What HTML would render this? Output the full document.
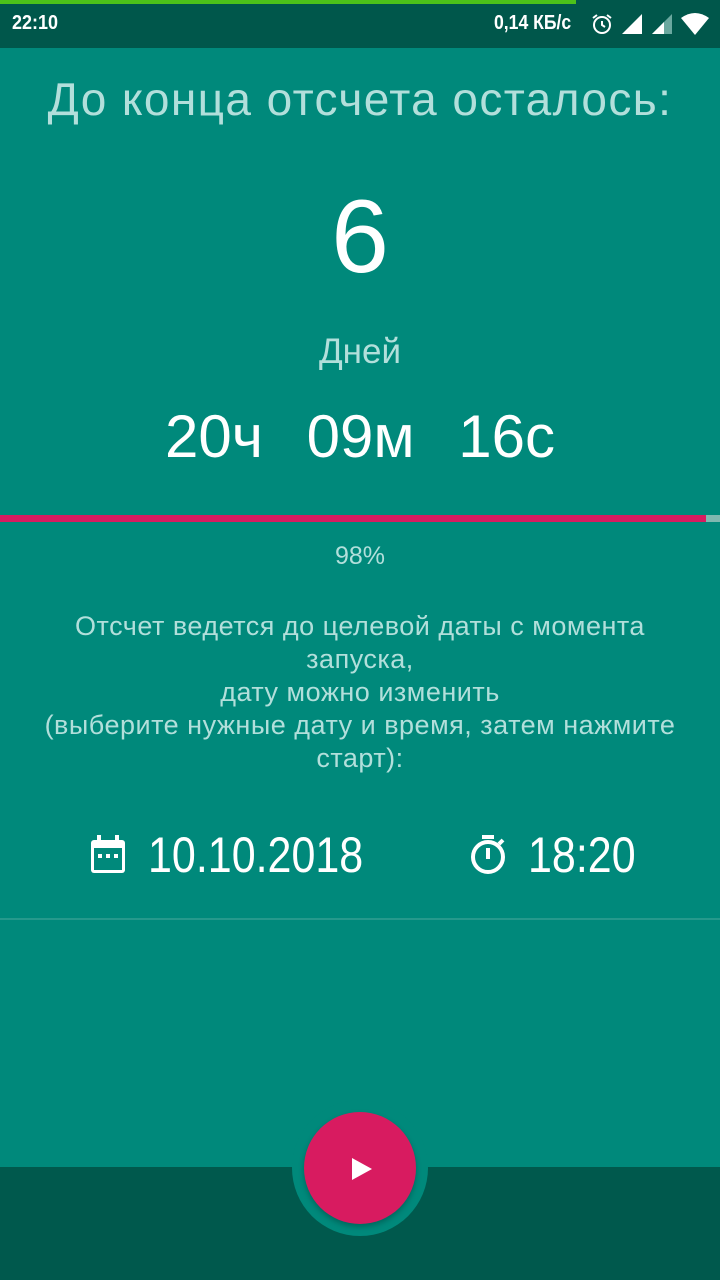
<!DOCTYPE html>
<html><head><meta charset="utf-8"><style>
*{margin:0;padding:0;box-sizing:border-box}
body{width:720px;height:1280px;background:#00897b;font-family:"Liberation Sans","DejaVu Sans",sans-serif;position:relative;overflow:hidden;color:#fff}
.sb{position:absolute;top:0;left:0;width:720px;height:48px;background:#00574b}
.t{position:absolute;left:0;width:720px;text-align:center;white-space:nowrap}
</style></head><body>
<div class="sb">
 <div style="position:absolute;top:0;left:0;width:576px;height:4px;background:#4cc21a"></div>
 <div style="position:absolute;left:12px;top:12px;font-size:20px;font-weight:bold;transform:scaleX(.9);transform-origin:left">22:10</div>
 <div style="position:absolute;left:494px;top:12px;font-size:20px;font-weight:bold;transform:scaleX(.88);transform-origin:left">0,14 КБ/с</div>
 <svg style="position:absolute;left:590px;top:12px" width="24" height="24" viewBox="0 0 24 24"><circle cx="12" cy="13" r="8" fill="none" stroke="#fff" stroke-width="2"/><path d="M12 9v4l3 2M3 6l4-3M21 6l-4-3" stroke="#fff" stroke-width="2" fill="none"/></svg>
 <svg style="position:absolute;left:620px;top:12px" width="24" height="24"><polygon points="2,22 22,22 22,2" fill="#fff"/></svg>
 <svg style="position:absolute;left:650px;top:12px" width="24" height="24"><polygon points="2,22 22,22 22,2" fill="#6aa89f"/><polygon points="2,22 14,22 14,10" fill="#fff"/></svg>
 <svg style="position:absolute;left:680px;top:12px" width="30" height="24"><path d="M1 6Q15 -4 29 6L15 23Z" fill="#fff"/></svg>
</div>
<div class="t" style="top:72px;font-size:46px;letter-spacing:1.4px;color:#b2dfdb">До конца отсчета осталось:</div>
<div class="t" style="top:178px;font-size:104px">6</div>
<div class="t" style="top:332px;font-size:35px;color:#b2dfdb">Дней</div>
<div class="t" style="top:402px;font-size:60px;word-spacing:27px">20ч 09м 16с</div>
<div style="position:absolute;top:515px;left:0;width:706px;height:7px;background:#d81b60"></div>
<div style="position:absolute;top:515px;left:706px;width:14px;height:7px;background:#7fb8b0"></div>
<div class="t" style="top:542px;font-size:25px;color:#b2dfdb">98%</div>
<div class="t" style="top:610px;font-size:27px;letter-spacing:0.5px;line-height:33px;color:#b2dfdb">Отсчет ведется до целевой даты с момента<br>запуска,<br>дату можно изменить<br>(выберите нужные дату и время, затем нажмите<br>старт):</div>
<svg style="position:absolute;left:89px;top:834px" width="38" height="40" viewBox="0 0 38 40"><rect x="2" y="6" width="34" height="33" rx="3" fill="#fff"/><rect x="5" y="14" width="28" height="22" fill="#00897b"/><rect x="8" y="1" width="4" height="8" fill="#fff"/><rect x="26" y="1" width="4" height="8" fill="#fff"/><rect x="9" y="20" width="4" height="4" fill="#fff"/><rect x="17" y="20" width="4" height="4" fill="#fff"/><rect x="25" y="20" width="4" height="4" fill="#fff"/></svg>
<div style="position:absolute;left:148px;top:826px;font-size:50px;transform:scaleX(.86);transform-origin:left">10.10.2018</div>
<svg style="position:absolute;left:468px;top:834px" width="42" height="42" viewBox="0 0 42 42"><rect x="14" y="1" width="12" height="4" fill="#fff"/><circle cx="20" cy="23" r="15" fill="none" stroke="#fff" stroke-width="4"/><rect x="18" y="14" width="4" height="11" fill="#fff"/><path d="M31 10l4-4" stroke="#fff" stroke-width="4"/></svg>
<div style="position:absolute;left:528px;top:826px;font-size:50px;transform:scaleX(.86);transform-origin:left">18:20</div>
<div style="position:absolute;top:918px;left:0;width:720px;height:2px;background:#26998c"></div>
<div style="position:absolute;top:1167px;left:0;width:720px;height:113px;background:#00594d"></div>
<div style="position:absolute;left:292px;top:1100px;width:136px;height:136px;border-radius:50%;background:#00897b"></div>
<div style="position:absolute;left:304px;top:1112px;width:112px;height:112px;border-radius:50%;background:#d81b60;box-shadow:0 3px 6px rgba(0,0,0,.25)"></div>
<svg style="position:absolute;left:350px;top:1156px" width="24" height="26"><polygon points="2,2 22,13 2,24" fill="#fff"/></svg>
</body></html>
